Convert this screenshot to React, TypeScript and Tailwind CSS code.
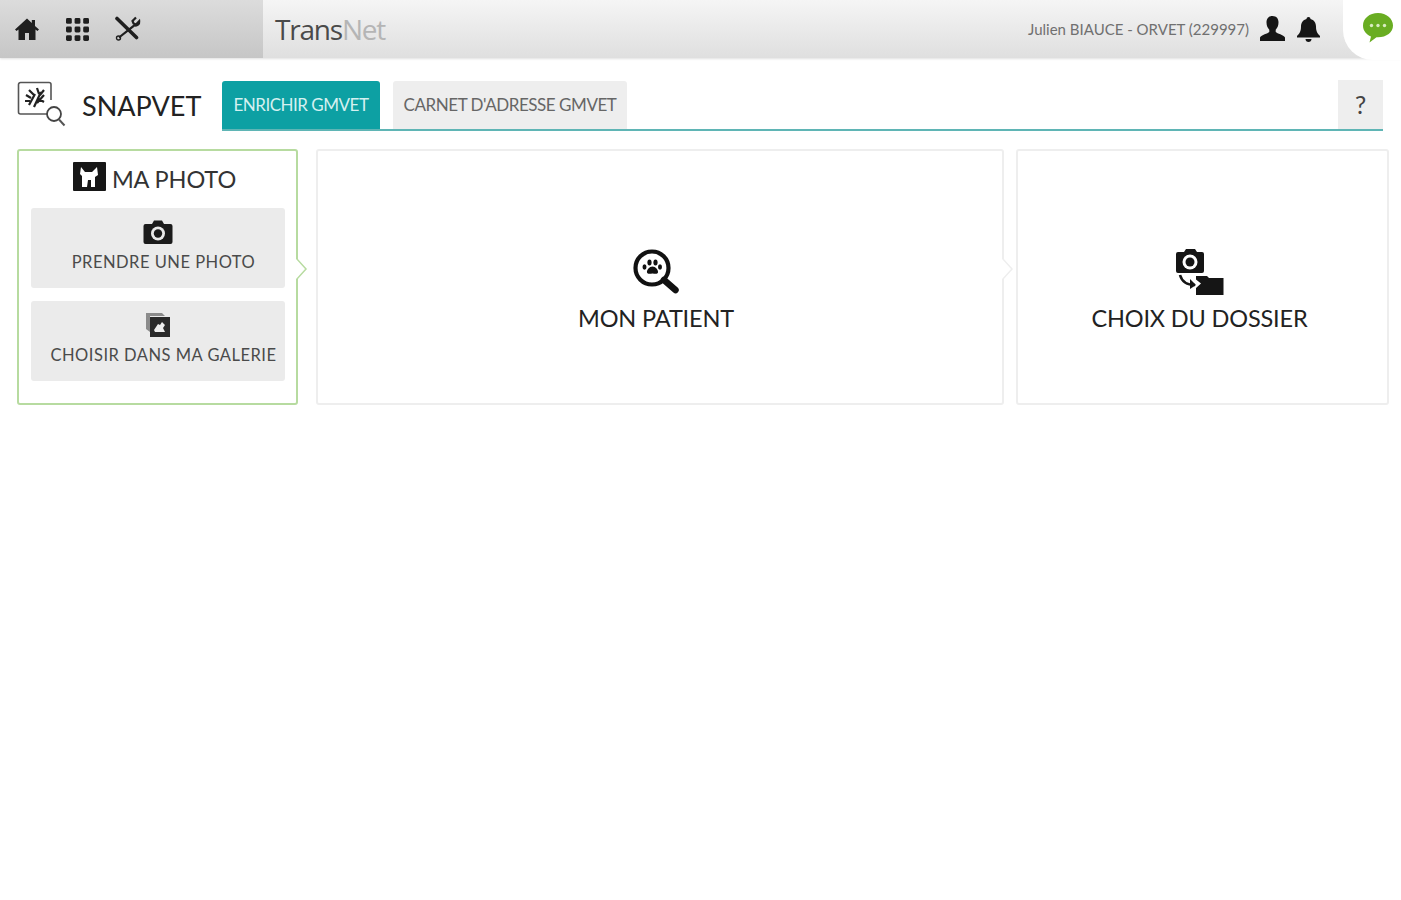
const font = { fontFamily: "Lato, 'Open Sans', sans-serif" };

function Home() {
  return (
    <svg width="26" height="24" viewBox="0 0 26 24" fill="#1f1f1f">
      <path d="M13 1.500 1 12.500l1.600 1.600 1.900-1.600V23h6.500v-7h4v7h6.500V12.500l1.900 1.600 1.600-1.600-4-3.600V3h-3.200v3L13 1.500z" />
    </svg>
  );
}

function Grid() {
  const cells = [0, 1, 2, 3, 4, 5, 6, 7, 8];
  return (
    <svg width="25" height="25" viewBox="0 0 25 25" fill="#1f1f1f">
      {cells.map((i) => (
        <rect key={i} x={1 + (i % 3) * 8.6} y={1 + Math.floor(i / 3) * 8.6} width="5.8" height="5.8" rx="1.4" />
      ))}
    </svg>
  );
}

function Tools() {
  return (
    <svg width="26" height="26" viewBox="0 0 26 26" fill="none" stroke="#1f1f1f">
      <path d="M2 2.500 L21.500 21.500" strokeWidth="3.600" strokeLinecap="round" />
      <path d="M21 1.500 l-3.500 3.500 1 2.500 2.500 1 3.200-3.400 c.4 3-2.200 5.200-4.800 4.200 L4 21.500" strokeWidth="2.200" />
      <circle cx="3.500" cy="22" r="2" strokeWidth="1.400" />
    </svg>
  );
}

function User() {
  return (
    <svg width="27" height="28" viewBox="0 0 27 28" fill="#151515">
      <path d="M13.500 1c4 0 6 2.800 6 6.500 0 3-1.200 5.700-2.800 7.200v2.300c1.500 1.600 7.800 2.800 9.300 5.500v3.500H1V22.500c1.500-2.700 7.800-3.900 9.300-5.500v-2.300C8.700 13.200 7.500 10.500 7.500 7.500 7.500 3.800 9.500 1 13.500 1z" />
    </svg>
  );
}

function Bell() {
  return (
    <svg width="25" height="27" viewBox="0 0 25 27" fill="#151515">
      <path d="M12.500 1c1.200 0 2 .8 2 2 3.500.8 5.500 3.800 5.500 7.500 0 5 1.500 7 4 9.500v1.500H1V20c2.500-2.500 4-4.500 4-9.500C5 6.800 7 3.800 10.500 3c0-1.200.8-2 2-2z" />
      <path d="M9.500 23h6c0 1.800-1.300 3-3 3s-3-1.200-3-3z" />
    </svg>
  );
}

function Chat() {
  return (
    <svg width="34" height="34" viewBox="0 0 34 34">
      <path d="M17 2C8.500 2 2 7.500 2 14.500c0 5.200 3.400 9 8 11l-1.500 6 7-5.200h1.500c8.500 0 15-5 15-11.800S25.500 2 17 2z" fill="#69ad22" />
      <circle cx="10.500" cy="14.500" r="1.700" fill="#d8ecc0" />
      <circle cx="17" cy="14.500" r="1.700" fill="#d8ecc0" />
      <circle cx="23.500" cy="14.500" r="1.700" fill="#d8ecc0" />
    </svg>
  );
}

function SnapIcon() {
  return (
    <svg width="50" height="48" viewBox="0 0 50 48" fill="none">
      <path d="M30 33H3.500a2 2 0 0 1-2-2V3.500a2 2 0 0 1 2-2H32a2 2 0 0 1 2 2V19" stroke="#555" strokeWidth="1.600" />
      <path d="M12 24l6-11M17 26l7-15M20 22l7-8M9 14l5 3M12 9l5 5M20 7l2 6M27 9l-4 5M8 20l5 0M22 18l5 3" stroke="#222" strokeWidth="2.200" />
      <circle cx="37" cy="33" r="7" stroke="#444" strokeWidth="1.800" />
      <path d="M42 38.500l5.500 6" stroke="#555" strokeWidth="2" />
    </svg>
  );
}

function DogBadge() {
  return (
    <svg width="33" height="29" viewBox="0 0 33 29">
      <rect width="33" height="29" rx="1" fill="#161616" />
      <path d="M8 5l4 5h7l5-5 1 8-3 2v10h-4v-7h-3l-1 7H9V14L7 12z" fill="#fff" />
    </svg>
  );
}

function Camera() {
  return (
    <svg width="30" height="26" viewBox="0 0 30 26">
      <path d="M2.500 5H9l2-3.500h8L21 5h6.500A2 2 0 0 1 29.500 7v16a2 2 0 0 1-2 2h-25a2 2 0 0 1-2-2V7a2 2 0 0 1 2-2z" fill="#1b1b1b" />
      <circle cx="15" cy="14.500" r="7" fill="#e9e9e9" />
      <circle cx="15" cy="14.500" r="4.200" fill="#1b1b1b" />
    </svg>
  );
}

function Gallery() {
  return (
    <svg width="26" height="26" viewBox="0 0 26 26">
      <path d="M1 1h16l3 3H5v16l-4-3z" fill="#8b8b8b" />
      <rect x="5" y="5" width="20" height="20" fill="#2a2a2a" />
      <path d="M9 18l4-6 2 1 2-3 3 3-2 3 2 4H10z" fill="#ededed" />
    </svg>
  );
}

function PawLens() {
  return (
    <svg width="48" height="48" viewBox="0 0 48 48" fill="none">
      <circle cx="20" cy="20" r="16.500" stroke="#111" strokeWidth="4.200" />
      <path d="M32 32l11.500 10" stroke="#111" strokeWidth="6.500" strokeLinecap="round" />
      <ellipse cx="12.500" cy="19" rx="2" ry="2.700" fill="#111" />
      <ellipse cx="17.500" cy="14.500" rx="2.100" ry="2.900" fill="#111" />
      <ellipse cx="23.500" cy="14.500" rx="2.100" ry="2.900" fill="#111" />
      <ellipse cx="28" cy="19" rx="2" ry="2.700" fill="#111" />
      <path d="M20.500 18.500c3 0 6 3.500 5.500 6-.5 2-3.500 1-5.500 1s-5 1-5.500-1c-.5-2.500 2.500-6 5.500-6z" fill="#111" />
    </svg>
  );
}

function CameraToFolder() {
  return (
    <svg width="50" height="48" viewBox="0 0 50 48">
      <path d="M3 4h6l2-3h9l2 3h5a2 2 0 0 1 2 2v17a2 2 0 0 1-2 2H3a2 2 0 0 1-2-2V6a2 2 0 0 1 2-2z" fill="#151515" />
      <circle cx="15" cy="14" r="7.500" fill="#fff" />
      <circle cx="15" cy="14" r="4.500" fill="#151515" />
      <path d="M21 28h11l2 2h14.500v17H21v-7l5-4.500-5-4z" fill="#151515" />
      <path d="M5 27c2 7 8 10 15 10" stroke="#151515" strokeWidth="2.600" fill="none" />
      <path d="M15 31l6 6-6 4z" fill="#151515" />
    </svg>
  );
}

function Chevron({ color }: { color: string }) {
  return (
    <svg className="absolute right-[-12px] top-[104px]" width="12" height="28" viewBox="0 0 12 28" fill="none">
      <path d="M0 3l10 11L0 25" fill="#fff" stroke={color} strokeWidth="1.500" />
    </svg>
  );
}

function PhotoButton({ icon, label }: { icon: React.ReactNode; label: string }) {
  return (
    <div className="flex h-20 w-[254px] flex-col items-center rounded-[3px] bg-[#ebebeb] pt-[10px]">
      <div className="flex h-7 w-full items-center justify-center">{icon}</div>
      <span className="mt-[6px] whitespace-nowrap pl-3 text-[16.500px] leading-5 tracking-[0.5px] text-[#4a4a4a]">{label}</span>
    </div>
  );
}

export default function App() {
  return (
    <div className="min-h-[900px] bg-white" style={font}>
      <header className="flex h-[58px] bg-gradient-to-b from-[#f5f5f5] to-[#dfdfdf] shadow-[0_1px_2px_rgba(0,0,0,0.12)]">
        <nav className="flex w-[263px] items-center gap-[25px] bg-gradient-to-b from-[#dcdcdc] to-[#c6c6c6] pl-[14px]">
          <Home />
          <Grid />
          <Tools />
        </nav>
        <div className="flex flex-1 items-center pl-[12px]">
          <span className="text-[28px] leading-none tracking-[-1.2px] text-[#4a4a4a]" style={{ fontFamily: "'Open Sans', sans-serif" }}>
            Trans<span className="text-[#b5b5b5]">Net</span>
          </span>
          <span className="ml-auto mr-[10px] text-[15px] tracking-[0px] text-[#707070]">Julien BIAUCE - ORVET (229997)</span>
          <span className="mr-[10px] flex"><User /></span>
          <span className="mr-[22px] flex"><Bell /></span>
        </div>
        <div className="relative z-10 flex h-[60px] w-[58px] items-center justify-center rounded-bl-[30px] bg-white pb-[4px] pl-[12px]">
          <Chat />
        </div>
      </header>

      <div className="pl-[17px] pr-[12px] pt-[23px]">
        <div className="flex h-[50px] items-center">
          <span className="mb-[2px] flex"><SnapIcon /></span>
          <h1 className="mb-[2px] ml-[15px] w-[140px] text-[27px] font-normal leading-none text-[#222]">SNAPVET</h1>
          <div className="mr-[6px] flex h-[50px] flex-1 items-end border-b-2 border-[#5fb5b5]">
            <div className="flex h-[48px] w-[158px] items-center justify-center rounded-t-[3px] bg-[#0da0a3] text-[17px] tracking-[-0.5px] text-[#d5f0f0]">
              ENRICHIR GMVET
            </div>
            <div className="ml-[13px] flex h-[48px] w-[234px] items-center justify-center rounded-t-[3px] bg-[#eeeeee] text-[17px] tracking-[-0.45px] text-[#666]">
              CARNET D'ADRESSE GMVET
            </div>
            <div className="ml-auto flex h-[49px] w-[45px] items-center justify-center bg-[#eeeeee] text-[25px] text-[#444]">?</div>
          </div>
        </div>

        <div className="mt-[18px] flex h-[256px]">
          <section className="relative z-10 flex w-[281px] flex-col items-center rounded-[3px] border-2 border-[#b7dba0] px-[12px]">
            <div className="flex h-[57px] w-full items-center justify-center pr-[6px]">
              <span className="mb-[6px] flex"><DogBadge /></span>
              <span className="ml-[6px] mt-[1px] text-[23.500px] tracking-[-0.1px] text-[#333]">MA PHOTO</span>
            </div>
            <div className="flex flex-col gap-[13px]">
              <PhotoButton icon={<Camera />} label="PRENDRE UNE PHOTO" />
              <PhotoButton icon={<Gallery />} label="CHOISIR DANS MA GALERIE" />
            </div>
            <Chevron color="#b7dba0" />
          </section>

          <section className="relative ml-[18px] flex w-[688px] flex-col items-center rounded-[3px] border-2 border-[#eeeeee] pt-[97px]">
            <span className="pr-[8px]"><PawLens /></span>
            <span className="mr-[8px] mt-[8px] text-[23.500px] leading-7 tracking-[-0.15px] text-[#222]">MON PATIENT</span>
            <Chevron color="#eeeeee" />
          </section>

          <section className="ml-[12px] flex w-[373px] flex-col items-center rounded-[3px] border-2 border-[#eeeeee] pt-[97px]">
            <span className="pr-[6px]"><CameraToFolder /></span>
            <span className="mr-[6px] mt-[8px] text-[23.500px] leading-7 tracking-[-0.15px] text-[#222]">CHOIX DU DOSSIER</span>
          </section>
        </div>
      </div>
    </div>
  );
}
